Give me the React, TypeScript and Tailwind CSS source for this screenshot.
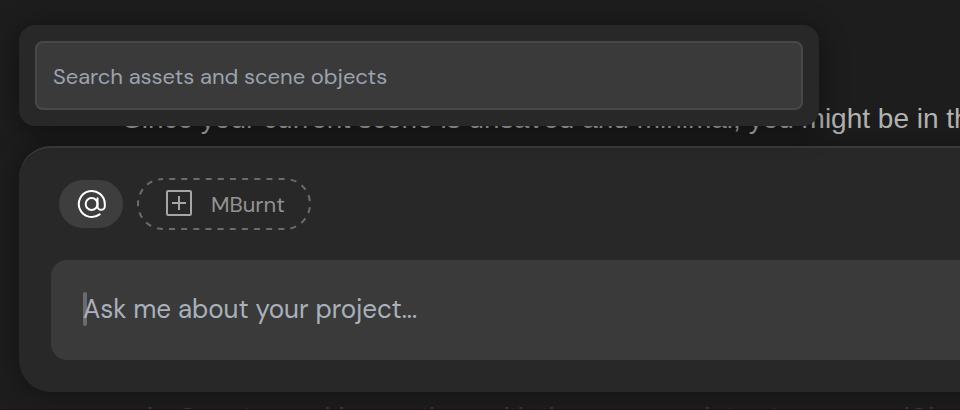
import React from "react";

function AtIcon() {
  return (
    <svg width="30" height="30" viewBox="0 0 30 30" fill="none" stroke="#fff" strokeWidth="2" strokeLinecap="round">
      <circle cx="14.6" cy="15" r="5.9" />
      <path d="M20.5 9.3v7.9a3.65 3.65 0 0 0 7.3 0V15a13 13 0 1 0-5.2 10.4" />
    </svg>
  );
}

function MaterialIcon() {
  return (
    <svg width="26" height="26" viewBox="0 0 26 26" fill="none" stroke="#a6a6a6" strokeWidth="2">
      <rect x="1" y="1" width="24" height="24" rx="1.2" />
      <path d="M13 6v14M6 13h14" />
    </svg>
  );
}

function AssetSearch() {
  return (
    <div className="absolute left-[19px] top-[25px] z-10 h-[101px] w-[800px] rounded-[16px] bg-[#282828] p-4 shadow-[0_4px_28px_rgba(0,0,0,0.45)]">
      <div className="flex h-[69px] items-center rounded-lg border-2 border-[#484848] bg-[#3a3a3a] px-4 pt-[2px] text-[22px] text-[#9ca3af]">
        <span className="whitespace-nowrap tracking-[-0.05px]">Search assets and scene objects</span>
      </div>
    </div>
  );
}

function ContextBar() {
  return (
    <div className="flex h-[52px] items-center gap-[14px] pl-2">
      <button className="flex h-12 w-16 items-center justify-center rounded-full bg-[#3e3e3e] pl-[2px]">
        <AtIcon />
      </button>
      <button className="relative flex h-[52px] w-[174px] items-center pl-[29px]">
        <svg className="absolute inset-0" width="174" height="52" fill="none">
          <rect x="1" y="1" width="172" height="50" rx="25" stroke="#6b6b6b" strokeWidth="2" strokeDasharray="6 6.155" strokeDashoffset="-6.2" />
        </svg>
        <span className="-mt-[2px]"><MaterialIcon /></span>
        <span className="ml-[19px] text-[22px] text-[#939393]">MBurnt</span>
      </button>
    </div>
  );
}

export default function App() {
  return (
    <div className="relative h-[410px] w-[960px] overflow-hidden bg-[#1d1d1d] pl-[19px] font-['DM_Sans',Inter,sans-serif] antialiased">
      <p className="h-[146px] whitespace-nowrap pl-[104px] pt-[103px] font-['Liberation_Sans',sans-serif] text-[28px] leading-8 text-[#b4b4b4]">
        Since your current scene is unsaved and minimal, you might be in th
      </p>
      <AssetSearch />
      <section className="relative h-[246px] w-[1000px] rounded-[32px] border-t-2 border-[#3a3a3a] bg-[#282828] pl-8 pt-[30px] shadow-[0_0_28px_rgba(0,0,0,0.4)]">
        <ContextBar />
        <div className="mt-[30px] flex h-[100px] items-center rounded-[16px] bg-[#3a3a3a] pl-8 text-[26px] text-[#a9b1bc]">
          <span className="-mr-1 -mt-[2px] h-[34px] w-1 rounded-sm bg-[#6b6b6b]" />
          <span className="relative whitespace-nowrap pb-[1px] tracking-[-0.04px]">Ask me about your project...</span>
        </div>
      </section>
      <p className="mt-[10px] whitespace-nowrap pl-[128px] font-['Liberation_Sans',sans-serif] text-[28px] leading-8 text-[#3a3a3a]">
        in Counter and layers then with the camera plates to a scene/Cloud
      </p>
      <div className="absolute inset-x-0 bottom-0 h-px bg-[#1d1016]" />
    </div>
  );
}
